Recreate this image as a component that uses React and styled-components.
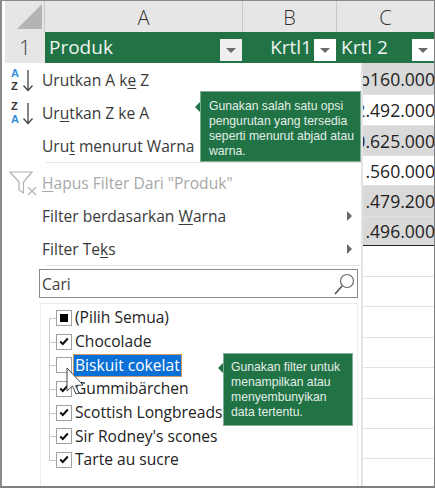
import React from "react";
import styled, { createGlobalStyle } from "styled-components";

const Global = createGlobalStyle`
  html, body { margin: 0; padding: 0; background: #fff; }
  body { width: 435px; height: 488px; overflow: hidden; font-family: "Open Sans", "Noto Sans", sans-serif; }
`;

const Frame = styled.div`
  position: relative;
  width: 435px;
  height: 488px;
  box-sizing: border-box;
  overflow: hidden;
  border-top: 1px solid #8a8a8a;
  border-bottom: 2px solid #7f7f7f;
  border-left: 2px solid #8a8a8a;
  border-right: 1px solid #7f7f7f;
  padding-left: 3px;
  background: #fff;
`;

const Sheet = styled.div`
  display: grid;
  grid-template-columns: 40px 198px 94px 98px;
  grid-template-rows: 31px 31px 32px 31px 30px 30px 31px 29px 31px;
  grid-auto-rows: 30.4px;
`;

const Corner = styled.div`
  background: #e6e6e6;
  border-right: 1px solid #c8c8c8;
  display: flex;
  align-items: flex-end;
  justify-content: flex-end;
  padding: 0 2px 3px 0;
  box-sizing: border-box;
`;

const ColHead = styled.div`
  background: #e6e6e6;
  border-right: 1px solid #c8c8c8;
  box-sizing: border-box;
  display: flex;
  align-items: center;
  justify-content: center;
  font: 300 20px "Open Sans", sans-serif;
  color: #333;
  padding-top: 1px;
`;

const RowHead = styled.div`
  background: #e6e6e6;
  box-sizing: border-box;
  display: flex;
  align-items: center;
  justify-content: center;
  font: 300 20px "Open Sans", sans-serif;
  color: #333;
`;

const HeaderCell = styled.div`
  background: #217346;
  color: #eef4f0;
  font: 400 19px "Open Sans", sans-serif;
  display: flex;
  align-items: center;
  justify-content: ${(p) => (p.$end ? "flex-end" : "space-between")};
  gap: 2px;
  padding: 0 1px 0 4px;
  box-sizing: border-box;
  line-height: 1;
`;

const FilterButton = styled.span`
  width: 22px;
  height: 22px;
  flex: none;
  background: ${(p) => (p.$dim ? "#efefef" : "#fff")};
  display: flex;
  align-items: center;
  justify-content: center;
  margin-top: 4px;
`;

const FilterArrow = styled.i`
  width: 0;
  height: 0;
  border-left: 5px solid transparent;
  border-right: 5px solid transparent;
  border-top: 5px solid #6b6b6b;
  margin-top: 2px;
`;

const DataCell = styled.div`
  grid-column: 4;
  background: ${(p) => (p.$shade ? "#d9d9d9" : "#fff")};
  border-bottom: ${(p) => (p.$last ? "1px solid #222" : "1px solid #e2e2e2")};
  box-sizing: border-box;
  font: 400 17.6px "Open Sans", sans-serif;
  color: #222;
  display: flex;
  align-items: center;
  justify-content: flex-end;
  white-space: nowrap;
  overflow: hidden;
  padding-right: 0;
`;

const Menu = styled.div`
  position: absolute;
  left: 1px;
  top: 62px;
  width: 360px;
  height: 423px;
  background: #fff;
  box-sizing: border-box;
  border-right: 2px solid #e4e4e4;
  display: flex;
  flex-direction: column;
`;

const MenuItem = styled.div`
  height: 33px;
  flex: none;
  display: flex;
  align-items: center;
  position: relative;
  padding-left: 39px;
  font: 400 15.6px "Open Sans", sans-serif;
  color: ${(p) => (p.$disabled ? "#a8a8a8" : "#3a3a3a")};
  white-space: nowrap;
  u { text-underline-offset: 2px; }
`;

const ItemIcon = styled.span`
  position: absolute;
  left: 4px;
  top: 50%;
  transform: translateY(-50%);
  display: flex;
`;

const SubArrow = styled.i`
  position: absolute;
  right: 9px;
  top: 50%;
  transform: translateY(-50%);
  width: 0;
  height: 0;
  border-top: 5px solid transparent;
  border-bottom: 5px solid transparent;
  border-left: 5px solid #6a6a6a;
`;

const Separator = styled.div`
  height: 1px;
  flex: none;
  margin: 0 0 ${(p) => p.$after}px 43px;
  background: #e6e6e6;
`;

const SearchBox = styled.div`
  flex: none;
  margin: 3px 3px 0 36px;
  height: 29px;
  box-sizing: border-box;
  border: 1px solid #8a8a8a;
  display: flex;
  align-items: center;
  justify-content: space-between;
  padding: 0 0 0 2px;
  font: 400 15.6px "Open Sans", sans-serif;
  color: #444;
`;

const TreeBox = styled.div`
  flex: 1;
  margin: 5px 3px 0 37px;
  border: 1px solid #ececec;
  border-bottom: none;
  position: relative;
  padding: 2px 0 0 15px;
  display: flex;
  flex-direction: column;
`;

const TreeRail = styled.div`
  position: absolute;
  left: 8px;
  top: 14px;
  width: 1px;
  height: 142px;
  background: #c8c8c8;
`;

const TreeRow = styled.div`
  height: 23.7px;
  flex: none;
  display: flex;
  align-items: center;
  gap: 1px;
  position: relative;
  font: 400 15.6px "Open Sans", sans-serif;
  color: #222;
  white-space: nowrap;
  &::before {
    content: "";
    position: absolute;
    left: -7px;
    top: 50%;
    width: 8px;
    height: 1px;
    background: #c8c8c8;
  }
`;

const CheckBox = styled.span`
  width: 14px;
  height: 14px;
  flex: none;
  border: 1px solid #a0a0a0;
  background: #fff;
  display: flex;
  align-items: center;
  justify-content: center;
  position: relative;
  z-index: 1;
`;

const TreeLabel = styled.span`
  padding: 0 2px;
  line-height: 23px;
  ${(p) => p.$selected && `
    background: #0a6fd6;
    color: #fff;
    outline: 1px solid #d09a6a;
    outline-offset: -1px;
  `}
`;

const Callout = styled.div`
  position: absolute;
  left: ${(p) => p.$x}px;
  top: ${(p) => p.$y}px;
  width: ${(p) => p.$w}px;
  height: ${(p) => p.$h}px;
  box-sizing: border-box;
  background: #217346;
  border: 1px solid #7fae96;
  color: #e4eee8;
  padding: ${(p) => p.$pad};
  font: 400 12.2px/15px "Liberation Sans", Arial, sans-serif;
  white-space: nowrap;
  z-index: 3;
  &::before {
    content: "";
    position: absolute;
    left: -6px;
    top: ${(p) => p.$tip}px;
    border-top: 5px solid transparent;
    border-bottom: 5px solid transparent;
    border-right: 5px solid #217346;
  }
`;

const Pointer = styled.svg`
  position: absolute;
  left: 64px;
  top: 366px;
  z-index: 4;
`;

const SortIcon = ({ first, second, firstColor, secondColor }) => (
  <svg width="32" height="26" viewBox="0 0 32 26">
    <text x="4" y="10" fontSize="11" fontWeight="700" fontFamily="Liberation Sans, sans-serif" fill={firstColor}>{first}</text>
    <text x="4" y="23" fontSize="11" fontWeight="700" fontFamily="Liberation Sans, sans-serif" fill={secondColor}>{second}</text>
    <path d="M21 3V23M16.5 18.5L21 23.5L25.5 18.5" fill="none" stroke="#444" strokeWidth="1.3" />
  </svg>
);

const FunnelIcon = () => (
  <svg width="30" height="26" viewBox="0 0 30 26">
    <path d="M3 2H25L16.5 12V23L12 20V12Z" fill="none" stroke="#b0b0b0" strokeWidth="1.2" />
    <path d="M21 17L29 25M29 17L21 25" stroke="#b0b0b0" strokeWidth="1.1" />
  </svg>
);

const Tick = () => (
  <svg width="10" height="9" viewBox="0 0 10 9">
    <path d="M1.2 4.5L3.8 7L8.8 1.5" fill="none" stroke="#111" strokeWidth="2" />
  </svg>
);

const Magnifier = () => (
  <svg width="26" height="26" viewBox="0 0 26 26">
    <circle cx="16" cy="10" r="6.5" fill="none" stroke="#666" strokeWidth="1.2" />
    <path d="M11 15L4 23" stroke="#555" strokeWidth="1.6" />
  </svg>
);

const values = [
  ["p160.000", true],
  ["2.492.000", false],
  ["0.625.000", true],
  [".560.000", false],
  [".479.200", true],
  [".496.000", true, true],
];

const emptyRows = [0, 1, 2, 3, 4, 5, 6];

const items = [
  { label: "Chocolade" },
  { label: "Biskuit cokelat", off: true, selected: true },
  { label: "Gummibärchen" },
  { label: "Scottish Longbreads" },
  { label: "Sir Rodney's scones" },
  { label: "Tarte au sucre" },
];

export default function App() {
  return (
    <>
      <Global />
      <Frame>
        <Sheet>
          <Corner>
            <svg width="25" height="25" viewBox="0 0 25 25"><path d="M25 0V25H0Z" fill="#b4b4b4" /></svg>
          </Corner>
          <ColHead>A</ColHead>
          <ColHead>B</ColHead>
          <ColHead>C</ColHead>

          <RowHead>1</RowHead>
          <HeaderCell>Produk<FilterButton $dim><FilterArrow /></FilterButton></HeaderCell>
          <HeaderCell $end>Krtl1<FilterButton><FilterArrow /></FilterButton></HeaderCell>
          <HeaderCell>Krtl 2<FilterButton><FilterArrow /></FilterButton></HeaderCell>

          {values.map(([v, shade, last]) => (
            <DataCell key={v} $shade={shade} $last={last}>{v}</DataCell>
          ))}
          {emptyRows.map((n) => <DataCell key={n} />)}
        </Sheet>

        <Menu>
          <MenuItem>
            <ItemIcon><SortIcon first="A" second="Z" firstColor="#2f8fdc" secondColor="#333" /></ItemIcon>
            <span>Urutkan A k<u>e</u> Z</span>
          </MenuItem>
          <MenuItem>
            <ItemIcon><SortIcon first="Z" second="A" firstColor="#333" secondColor="#2f8fdc" /></ItemIcon>
            <span>Ur<u>u</u>tkan Z ke A</span>
          </MenuItem>
          <MenuItem><span>Uru<u>t</u> menurut Warna</span></MenuItem>
          <Separator $after={3} />
          <MenuItem $disabled>
            <ItemIcon><FunnelIcon /></ItemIcon>
            <span><u>H</u>apus Filter Dari "Produk"</span>
          </MenuItem>
          <MenuItem><span>Filter berdasarkan <u>W</u>arna</span><SubArrow /></MenuItem>
          <MenuItem><span>Filter Te<u>k</u>s</span><SubArrow /></MenuItem>
          <Separator $after={0} />
          <SearchBox>Cari<Magnifier /></SearchBox>
          <TreeBox>
            <TreeRail />
            <TreeRow>
              <CheckBox><svg width="8" height="8"><rect width="8" height="8" fill="#000" /></svg></CheckBox>
              <TreeLabel>(Pilih Semua)</TreeLabel>
            </TreeRow>
            {items.map((it) => (
              <TreeRow key={it.label}>
                <CheckBox>{!it.off && <Tick />}</CheckBox>
                <TreeLabel $selected={it.selected}>{it.label}</TreeLabel>
              </TreeRow>
            ))}
          </TreeBox>
        </Menu>

        <Callout $x={198} $y={90} $w={161} $h={71} $pad="7px 0 0 8px" $tip={10}>
          Gunakan salah satu opsi<br />pengurutan yang tersedia<br />seperti menurut abjad atau<br />warna.
        </Callout>
        <Callout $x={221} $y={352} $w={130} $h={73} $pad="6px 0 0 7px" $tip={9}>
          Gunakan filter untuk<br />menampilkan atau<br />menyembunyikan<br />data tertentu.
        </Callout>

        <Pointer width="20" height="30" viewBox="0 0 20 30">
          <path d="M1 1V24L6.5 19L10 27L13 26L9.5 18.5L17 18Z" fill="#fff" stroke="#444" strokeWidth="1" />
        </Pointer>
      </Frame>
    </>
  );
}
